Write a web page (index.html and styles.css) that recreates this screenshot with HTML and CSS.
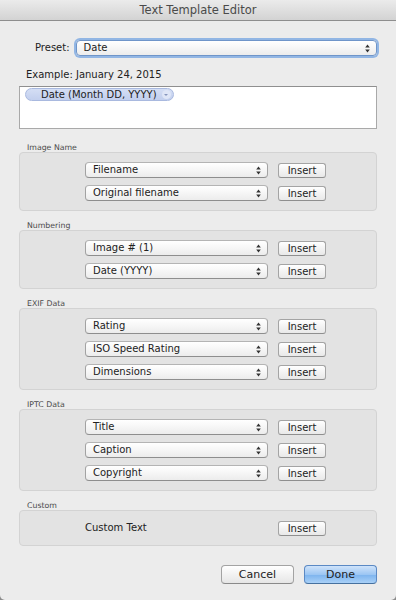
FILE: index.html
```html
<!DOCTYPE html>
<html lang="en">
<head>
    <meta charset="UTF-8">
    <title>Text Template Editor</title>
    <link rel="stylesheet" href="styles.css">
</head>
<body>
<div class="window">
    <div class="titlebar">Text Template Editor</div>

    <div class="content">
        <div class="preset-row">
            <span class="preset-label">Preset:</span>
            <div class="select select-focus">
                <span>Date</span>
                <svg class="arrows" width="5" height="9" viewBox="0 0 5 9"><path d="M2.5 0.5 L4.8 3.5 L0.2 3.5 Z M2.5 8.5 L4.8 5.5 L0.2 5.5 Z" fill="#333"/></svg>
            </div>
        </div>

        <p class="example">Example: January 24, 2015</p>

        <div class="template-box">
            <span class="token">Date (Month DD, YYYY)<span class="token-arrow"></span></span>
        </div>

        <!-- Image Name -->
        <div class="group-label">Image Name</div>
        <div class="group">
            <div class="row">
                <div class="select"><span>Filename</span><svg class="arrows" width="5" height="9" viewBox="0 0 5 9"><path d="M2.5 0.5 L4.8 3.5 L0.2 3.5 Z M2.5 8.5 L4.8 5.5 L0.2 5.5 Z" fill="#333"/></svg></div>
                <button class="insert">Insert</button>
            </div>
            <div class="row">
                <div class="select"><span>Original filename</span><svg class="arrows" width="5" height="9" viewBox="0 0 5 9"><path d="M2.5 0.5 L4.8 3.5 L0.2 3.5 Z M2.5 8.5 L4.8 5.5 L0.2 5.5 Z" fill="#333"/></svg></div>
                <button class="insert">Insert</button>
            </div>
        </div>

        <!-- Numbering -->
        <div class="group-label">Numbering</div>
        <div class="group">
            <div class="row">
                <div class="select"><span>Image # (1)</span><svg class="arrows" width="5" height="9" viewBox="0 0 5 9"><path d="M2.5 0.5 L4.8 3.5 L0.2 3.5 Z M2.5 8.5 L4.8 5.5 L0.2 5.5 Z" fill="#333"/></svg></div>
                <button class="insert">Insert</button>
            </div>
            <div class="row">
                <div class="select"><span>Date (YYYY)</span><svg class="arrows" width="5" height="9" viewBox="0 0 5 9"><path d="M2.5 0.5 L4.8 3.5 L0.2 3.5 Z M2.5 8.5 L4.8 5.5 L0.2 5.5 Z" fill="#333"/></svg></div>
                <button class="insert">Insert</button>
            </div>
        </div>

        <!-- EXIF Data -->
        <div class="group-label">EXIF Data</div>
        <div class="group">
            <div class="row">
                <div class="select"><span>Rating</span><svg class="arrows" width="5" height="9" viewBox="0 0 5 9"><path d="M2.5 0.5 L4.8 3.5 L0.2 3.5 Z M2.5 8.5 L4.8 5.5 L0.2 5.5 Z" fill="#333"/></svg></div>
                <button class="insert">Insert</button>
            </div>
            <div class="row">
                <div class="select"><span>ISO Speed Rating</span><svg class="arrows" width="5" height="9" viewBox="0 0 5 9"><path d="M2.5 0.5 L4.8 3.5 L0.2 3.5 Z M2.5 8.5 L4.8 5.5 L0.2 5.5 Z" fill="#333"/></svg></div>
                <button class="insert">Insert</button>
            </div>
            <div class="row">
                <div class="select"><span>Dimensions</span><svg class="arrows" width="5" height="9" viewBox="0 0 5 9"><path d="M2.5 0.5 L4.8 3.5 L0.2 3.5 Z M2.5 8.5 L4.8 5.5 L0.2 5.5 Z" fill="#333"/></svg></div>
                <button class="insert">Insert</button>
            </div>
        </div>

        <!-- IPTC Data -->
        <div class="group-label">IPTC Data</div>
        <div class="group">
            <div class="row">
                <div class="select"><span>Title</span><svg class="arrows" width="5" height="9" viewBox="0 0 5 9"><path d="M2.5 0.5 L4.8 3.5 L0.2 3.5 Z M2.5 8.5 L4.8 5.5 L0.2 5.5 Z" fill="#333"/></svg></div>
                <button class="insert">Insert</button>
            </div>
            <div class="row">
                <div class="select"><span>Caption</span><svg class="arrows" width="5" height="9" viewBox="0 0 5 9"><path d="M2.5 0.5 L4.8 3.5 L0.2 3.5 Z M2.5 8.5 L4.8 5.5 L0.2 5.5 Z" fill="#333"/></svg></div>
                <button class="insert">Insert</button>
            </div>
            <div class="row">
                <div class="select"><span>Copyright</span><svg class="arrows" width="5" height="9" viewBox="0 0 5 9"><path d="M2.5 0.5 L4.8 3.5 L0.2 3.5 Z M2.5 8.5 L4.8 5.5 L0.2 5.5 Z" fill="#333"/></svg></div>
                <button class="insert">Insert</button>
            </div>
        </div>

        <!-- Custom -->
        <div class="group-label">Custom</div>
        <div class="group">
            <div class="row">
                <div class="custom-text">Custom Text</div>
                <button class="insert">Insert</button>
            </div>
        </div>

        <div class="actions">
            <button class="btn">Cancel</button>
            <button class="btn btn-default">Done</button>
        </div>
    </div>
</div>
</body>
</html>
```

FILE: styles.css
```css
html {
    background: #8c8c8c;
}

body {
    margin: 0;
    padding: 0;
    font-family: "DejaVu Sans", Verdana, sans-serif;
    font-size: 10px;
    color: #222;
}

.window {
    width: 396px;
    height: 600px;
    background: #ececec;
    border-radius: 0 0 5px 5px;
    overflow: hidden;
}

.titlebar {
    height: 20px;
    line-height: 20px;
    border-bottom: 1px solid #8e8e8e;
    background: linear-gradient(#ebebeb, #d3d3d3);
    text-align: center;
    font-size: 11.5px;
    color: #4a4a4a;
}

.content {
    padding: 0 19px;
}

.preset-row {
    display: flex;
    align-items: center;
    gap: 6px;
    margin-top: 19px;
    padding-left: 16px;
}

.preset-label {
    line-height: 16px;
}

.select {
    display: flex;
    align-items: center;
    justify-content: space-between;
    box-sizing: border-box;
    height: 16px;
    width: 183px;
    padding: 0 6px 0 7px;
    border: 1px solid #a2a2a2;
    border-top-color: #b4b4b4;
    border-bottom-color: #8e8e8e;
    border-radius: 4px;
    background: linear-gradient(#ffffff, #f6f6f6 50%, #ececec);
    line-height: 14px;
}

.select-focus {
    flex: 1;
    width: auto;
    box-shadow: 0 0 0 2px #92b6e4;
    border-color: #6f95c9;
}

.arrows {
    display: block;
}

.example {
    margin: 13px 0 5px 0;
    padding-left: 7px;
    line-height: 12px;
}

.template-box {
    box-sizing: border-box;
    height: 43px;
    border: 1px solid #a9a9a9;
    border-top-color: #8f8f8f;
    background: #ffffff;
    padding: 1px 5px;
}

.token {
    display: inline-flex;
    align-items: center;
    box-sizing: border-box;
    height: 13px;
    padding: 0 2px 0 15px;
    border: 1px solid #a9b9df;
    border-radius: 7px;
    background: linear-gradient(#d4def4, #c2cfee);
    line-height: 11px;
}

.token-arrow {
    display: inline-block;
    width: 9px;
    height: 9px;
    margin-left: 5px;
    border-radius: 50%;
    background: #dfe6f7;
    position: relative;
}

.token-arrow::after {
    content: "";
    position: absolute;
    left: 2.5px;
    top: 3.5px;
    border-left: 2px solid transparent;
    border-right: 2px solid transparent;
    border-top: 2px solid #8796bd;
}

.group-label {
    margin-top: 14px;
    padding-left: 8px;
    height: 9px;
    line-height: 9px;
    font-size: 7.8px;
    color: #4a4a4a;
}

.group + .group-label {
    margin-top: 10px;
}

.group {
    border: 1px solid #d3d3d3;
    border-radius: 4px;
    background: #e3e3e3;
    padding: 9px 0 9px 65px;
    display: flex;
    flex-direction: column;
    gap: 7px;
}

.row {
    display: flex;
    align-items: center;
    gap: 10px;
    height: 16px;
}

.insert {
    box-sizing: border-box;
    width: 48px;
    height: 15px;
    padding: 0;
    border: 1px solid #a4a4a4;
    border-bottom-color: #8f8f8f;
    border-radius: 3px;
    background: linear-gradient(#ffffff, #f3f3f3 50%, #e9e9e9);
    font-family: "DejaVu Sans", Verdana, sans-serif;
    font-size: 10px;
    color: #222;
    line-height: 13px;
}

.custom-text {
    width: 183px;
    line-height: 16px;
}

.actions {
    display: flex;
    justify-content: flex-end;
    gap: 10px;
    margin-top: 19px;
}

.btn {
    box-sizing: border-box;
    width: 73px;
    height: 19px;
    padding: 0;
    border: 1px solid #a3a3a3;
    border-bottom-color: #8a8a8a;
    border-radius: 4px;
    background: linear-gradient(#ffffff, #f2f2f2 50%, #e6e6e6);
    font-family: "DejaVu Sans", Verdana, sans-serif;
    font-size: 11px;
    color: #222;
    line-height: 17px;
}

.btn-default {
    border-color: #5b89c4;
    border-bottom-color: #46719f;
    background: linear-gradient(#cfe3fa, #9cc6f3 50%, #7cb3ee 51%, #a9d0f7);
}
```
